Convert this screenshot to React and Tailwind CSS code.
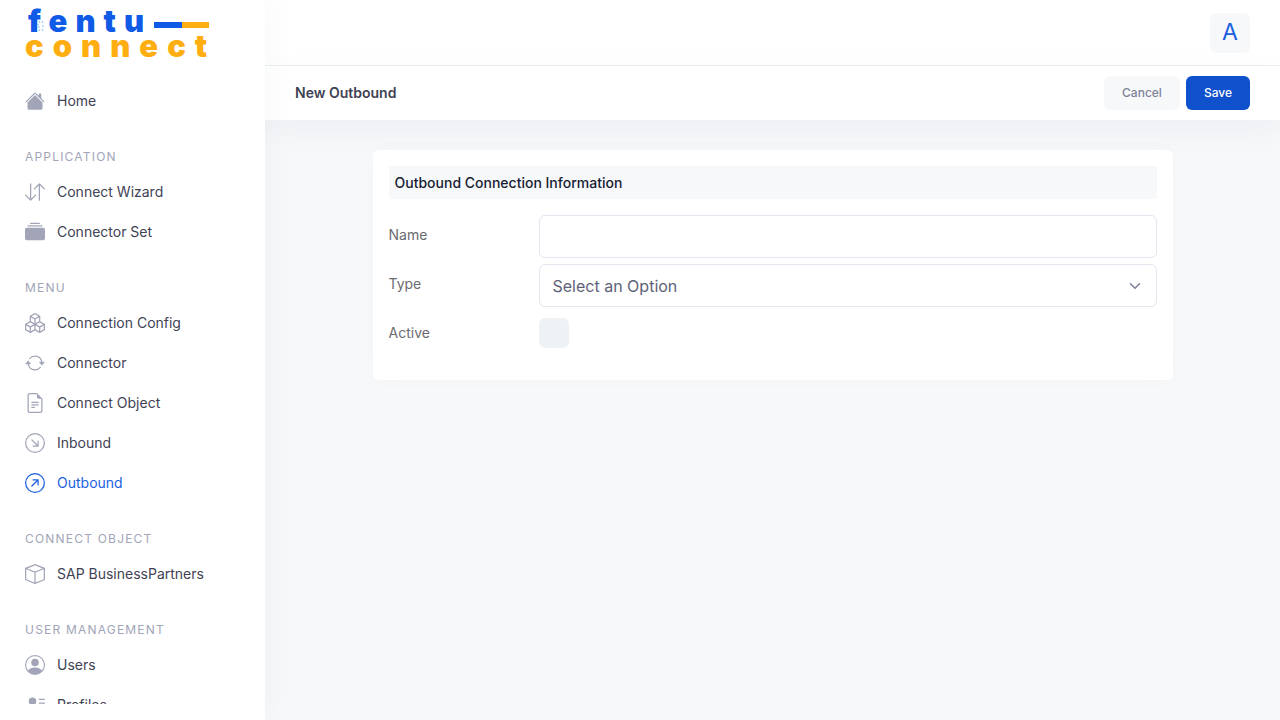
import { useState } from "react";
import {
  BsHouseFill,
  BsArrowDownUp,
  BsCollectionFill,
  BsBoxes,
  BsArrowRepeat,
  BsFileEarmarkText,
  BsArrowDownRightCircle,
  BsArrowUpRightCircle,
  BsBox,
  BsPersonCircle,
  BsPersonLinesFill,
} from "react-icons/bs";
import { FiChevronDown } from "react-icons/fi";

const sections = [
  { items: [{ label: "Home", icon: BsHouseFill }] },
  {
    title: "Application",
    items: [
      { label: "Connect Wizard", icon: BsArrowDownUp },
      { label: "Connector Set", icon: BsCollectionFill },
    ],
  },
  {
    title: "Menu",
    items: [
      { label: "Connection Config", icon: BsBoxes },
      { label: "Connector", icon: BsArrowRepeat },
      { label: "Connect Object", icon: BsFileEarmarkText },
      { label: "Inbound", icon: BsArrowDownRightCircle },
      { label: "Outbound", icon: BsArrowUpRightCircle },
    ],
  },
  {
    title: "Connect Object",
    items: [{ label: "SAP BusinessPartners", icon: BsBox }],
  },
  {
    title: "User Management",
    items: [
      { label: "Users", icon: BsPersonCircle },
      { label: "Profiles", icon: BsPersonLinesFill },
    ],
  },
];

const Logo = () => (
  <svg
    width="200"
    height="66"
    viewBox="0 0 200 66"
    role="img"
    aria-label="fentu connect"
    className="font-['Inter',sans-serif] font-black text-[31px]"
  >
    <text x="3" y="32" fill="#0f5ae6" className="tracking-[8px]">
      fentu
    </text>
    <rect x="129" y="22" width="28" height="6" fill="#0f5ae6" />
    <rect x="157" y="22" width="27" height="6" fill="#ffae12" />
    <text x="0" y="57" fill="#ffae12" className="tracking-[9px]">
      connect
    </text>
    {/* Small spark beside the f */}
    <path
      d="M14 21l1 2M18 21l-1 2M12 24l2 1M13 27h2M17 26h2M14 31l1-2M18 31l-1-2"
      stroke="#8fc3f5"
      strokeWidth="1"
      fill="none"
    />
  </svg>
);

const Sidebar = ({ active, onSelect }) => (
  <aside className="sticky top-0 z-10 flex h-screen w-[265px] shrink-0 flex-col bg-white pb-4 shadow-[0_0_28px_0_rgba(82,100,120,0.05)]">
    <div className="px-[25px]">
      <a href="#home" className="block">
        <Logo />
      </a>
    </div>
    <nav className="mt-[15px] min-h-0 flex-1 overflow-hidden">
      {sections.map((section, i) => (
        <div key={i}>
          {section.title && (
            <h2 className="mt-7 mb-[7px] px-[25px] text-xs leading-4 tracking-widest text-[#a1a5b7] uppercase">
              {section.title}
            </h2>
          )}
          <ul>
            {section.items.map(({ label, icon: Icon }) => (
              <li key={label}>
                <a
                  href="#menu"
                  onClick={() => onSelect(label)}
                  className={
                    label === active
                      ? "flex h-10 items-center gap-3 px-[25px] text-[#1b5fe0]"
                      : "flex h-10 items-center gap-3 px-[25px] text-[#3f4254]"
                  }
                >
                  <Icon
                    className={
                      label === active
                        ? "size-5 text-[#1b5fe0]"
                        : "size-5 text-[#a1a5b7]"
                    }
                  />
                  <span>{label}</span>
                </a>
              </li>
            ))}
          </ul>
        </div>
      ))}
    </nav>
  </aside>
);

const App = () => {
  const [active, setActive] = useState("Outbound");
  const [name, setName] = useState("");
  const [type, setType] = useState("");
  const [enabled, setEnabled] = useState(false);

  return (
    <div className="flex min-h-screen bg-[#f6f8fa] font-['Inter',sans-serif] text-sm">
      <Sidebar active={active} onSelect={setActive} />

      <div className="min-w-0 flex-1">
        {/* Header */}
        <header className="flex h-[66px] items-center justify-end border-b border-[#eceff2] bg-white px-[30px]">
          <button
            type="button"
            className="size-10 rounded-md bg-[#f7f8fa] text-[23px] text-[#1b5fe0]"
          >
            A
          </button>
        </header>

        {/* Toolbar */}
        <div className="flex h-[54px] items-center justify-between bg-white px-[30px] shadow-[0_10px_30px_0_rgba(82,100,120,0.06)]">
          <h1 className="font-semibold text-[#3f4254]">New Outbound</h1>
          <div className="flex gap-[6px] text-xs font-medium">
            <button
              type="button"
              className="h-[34px] rounded-md bg-[#f6f8fa] px-[18px] text-[#7e8299]"
            >
              Cancel
            </button>
            <button
              type="submit"
              form="outbound-form"
              className="h-[34px] rounded-md bg-[#0f50cd] px-[18px] text-white"
            >
              Save
            </button>
          </div>
        </div>

        {/* Form */}
        <main className="px-[30px] py-[30px]">
          <form
            id="outbound-form"
            onSubmit={(e) => e.preventDefault()}
            className="relative mx-auto max-w-[800px] rounded-md bg-white px-4 pt-4 pb-6 shadow-[0_0_20px_0_rgba(76,87,125,0.02)]"
          >
            <h2 className="bg-[#f6f8fa] px-[6px] py-[6px] leading-[21px] font-medium text-[#181c32]">
              Outbound Connection Information
            </h2>
            <div className="mt-4 flex flex-col gap-[6px] text-[#6b6b6f]">
              <div className="flex h-[43px] items-center">
                <label htmlFor="name" className="w-[150px] shrink-0 pb-1">
                  Name
                </label>
                <input
                  id="name"
                  type="text"
                  value={name}
                  onChange={(e) => setName(e.target.value)}
                  className="h-full min-w-0 flex-1 rounded-md border border-[#e4e6ef] px-3 text-[#5e6278]"
                />
              </div>
              <div className="flex h-[43px] items-center">
                <label htmlFor="type" className="w-[150px] shrink-0 pb-1">
                  Type
                </label>
                <div className="relative h-full min-w-0 flex-1">
                  <select
                    id="type"
                    value={type}
                    onChange={(e) => setType(e.target.value)}
                    className="size-full appearance-none rounded-md border border-[#e4e6ef] bg-white px-[13px] text-base text-[#5e6278]"
                  >
                    <option value="">Select an Option</option>
                  </select>
                  <FiChevronDown className="pointer-events-none absolute inset-y-0 right-[13px] my-auto size-[18px] text-[#7e8299]" />
                </div>
              </div>
              <div className="flex h-[43px] items-center pb-1">
                <label htmlFor="active" className="w-[150px] shrink-0">
                  Active
                </label>
                <input
                  id="active"
                  type="checkbox"
                  checked={enabled}
                  onChange={(e) => setEnabled(e.target.checked)}
                  className="size-[30px] appearance-none rounded-md bg-[#eef2f5] checked:bg-[#0f50cd]"
                />
              </div>
            </div>
          </form>
        </main>
      </div>
    </div>
  );
};

export default App;
